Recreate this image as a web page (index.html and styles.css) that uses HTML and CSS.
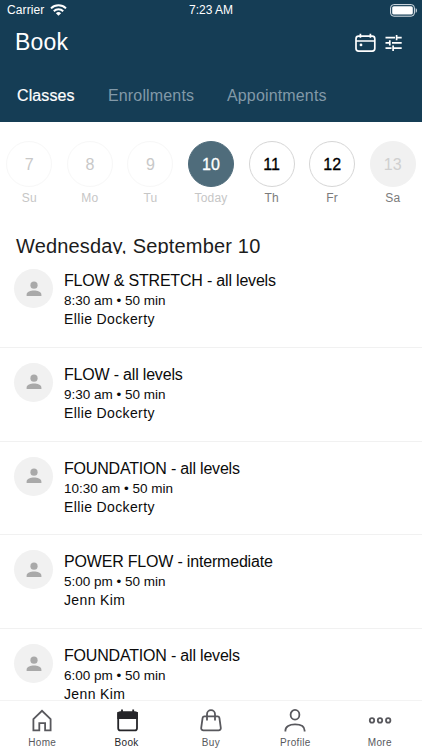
FILE: index.html
```
<!DOCTYPE html>
<html lang="en">
<head>
<meta charset="utf-8">
<title>Book</title>
<link rel="stylesheet" href="styles.css">
</head>
<body>
<svg width="0" height="0" class="defs">
  <symbol id="person" viewBox="0 0 16 16"><circle cx="8" cy="4.2" r="3.6"/><path d="M.6 14.9v-1.2c0-2.8 4.2-4.1 7.4-4.1s7.4 1.3 7.4 4.1v1.2z"/></symbol>
</svg>
<div class="app">
  <header class="header">
    <div class="status">
      <div class="carrier"><span>Carrier</span>
        <svg width="17" height="12" viewBox="0 0 17 12"><g fill="none" stroke="#fff" stroke-width="2"><path d="M1 4.4a10.8 10.8 0 0 1 15 0"/><path d="M3.8 7.2a6.8 6.8 0 0 1 9.4 0"/></g><path d="M5.9 9.2a3.8 3.8 0 0 1 5.2 0L8.5 11.8z" fill="#fff"/></svg>
      </div>
      <div class="clock">7:23 AM</div>
      <svg class="battery" width="28" height="13" viewBox="0 0 28 13"><rect x=".6" y=".6" width="23.8" height="11.6" rx="3.2" fill="none" stroke="#dce4ea" stroke-width="1"/><rect x="2.2" y="2.2" width="20.6" height="8.4" rx="1.6" fill="#fff"/><path d="M25.7 4.2c1.6.6 1.6 3.9 0 4.5z" fill="#dce4ea"/></svg>
    </div>
    <div class="titlebar">
      <h1>Book</h1>
      <div class="actions">
        <svg width="21" height="20" viewBox="0 0 21 20" fill="none" stroke="#fff" stroke-width="1.7"><rect x="1" y="3.2" width="18.8" height="15" rx="2.6"/><path d="M1 8h18.8M5.4.8v4M15.4.8v4"/><circle cx="6" cy="11.9" r="1.4" fill="#fff" stroke="none"/></svg>
        <svg width="18" height="18" viewBox="0 0 18 18" fill="none" stroke="#fff" stroke-width="1.7"><path d="M.5 3.6h9.5M11.6.9v5.4M11.6 3.6h5.1M.5 8.9h4.8M4.8 6.2v5.4M7 8.9h9.7M.5 14.2h6M8.1 11.5v5.4M8.1 14.2h8.6"/></svg>
      </div>
    </div>
    <nav class="tabs"><span class="on t1">Classes</span><span class="t2">Enrollments</span><span class="t3">Appointments</span></nav>
  </header>
  <section class="week">
    <div class="day past"><b>7</b><span>Su</span></div>
    <div class="day past"><b>8</b><span>Mo</span></div>
    <div class="day past"><b>9</b><span>Tu</span></div>
    <div class="day today"><b>10</b><span>Today</span></div>
    <div class="day"><b>11</b><span>Th</span></div>
    <div class="day"><b>12</b><span>Fr</span></div>
    <div class="day off"><b>13</b><span>Sa</span></div>
  </section>
  <h2>Wednesday, September 10</h2>
  <main class="list">
    <article class="row"><div class="avatar"><svg width="16" height="16"><use href="#person"/></svg></div><div><div class="name">FLOW &amp; STRETCH - all levels</div><div class="time">8:30 am • 50 min</div><div class="coach">Ellie Dockerty</div></div></article>
    <article class="row"><div class="avatar"><svg width="16" height="16"><use href="#person"/></svg></div><div><div class="name">FLOW - all levels</div><div class="time">9:30 am • 50 min</div><div class="coach">Ellie Dockerty</div></div></article>
    <article class="row"><div class="avatar"><svg width="16" height="16"><use href="#person"/></svg></div><div><div class="name">FOUNDATION - all levels</div><div class="time">10:30 am • 50 min</div><div class="coach">Ellie Dockerty</div></div></article>
    <article class="row"><div class="avatar"><svg width="16" height="16"><use href="#person"/></svg></div><div><div class="name">POWER FLOW - intermediate</div><div class="time">5:00 pm • 50 min</div><div class="coach">Jenn Kim</div></div></article>
    <article class="row"><div class="avatar"><svg width="16" height="16"><use href="#person"/></svg></div><div><div class="name">FOUNDATION - all levels</div><div class="time">6:00 pm • 50 min</div><div class="coach">Jenn Kim</div></div></article>
  </main>
  <footer class="bar">
    <div class="item"><svg width="24" height="24" viewBox="0 0 24 24"><path d="M3.4 10.2 12 1.8l8.6 8.4v11.2h-5.5v-7.2H9.3v7.2H3.4z"/></svg><span>Home</span></div>
    <div class="item on"><svg width="24" height="24" viewBox="0 0 24 24"><rect x="3.2" y="3.2" width="18.8" height="18.2" rx="2.2"/><path d="M7 .6v4M18.2 .6v4"/><path class="solid" d="M3.2 4h18.8v5H3.2z"/></svg><span>Book</span></div>
    <div class="item"><svg width="24" height="24" viewBox="0 0 24 24"><path d="M5.4 7.4h13.2q1.5 0 1.8 1.5l1.4 9.9a2.2 2.2 0 0 1-2.2 2.6H4.4a2.2 2.2 0 0 1-2.2-2.6l1.4-9.9q.3-1.5 1.8-1.5zM8 11.4V5.2a4 4 0 0 1 8 0v6.2"/></svg><span>Buy</span></div>
    <div class="item"><svg width="24" height="24" viewBox="0 0 24 24"><ellipse cx="12" cy="5.8" rx="4.4" ry="4.9"/><path d="M2.4 22.6v-1c0-4.2 4-6.2 9.6-6.2s9.6 2 9.6 6.2v1"/></svg><span>Profile</span></div>
    <div class="item"><svg width="24" height="24" viewBox="0 0 24 24"><circle cx="4" cy="11.4" r="2.2"/><circle cx="12" cy="11.4" r="2.2"/><circle cx="20.2" cy="11.4" r="2.2"/></svg><span>More</span></div>
  </footer>
</div>
</body>
</html>
```
FILE: styles.css
```
* { box-sizing: border-box; }
body { margin: 0; background: #fff; color: #0b0b0b; font-family: "Liberation Sans", Arial, sans-serif; }
svg { display: block; flex: none; }
.defs { position: absolute; }
.app { width: 422px; height: 750px; display: flex; flex-direction: column; overflow: hidden; }
.header { height: 122px; flex: none; background: #153d55; color: #fff; }
.status { height: 20px; display: grid; grid-template-columns: 1fr auto 1fr; align-items: center; padding: 0 4px 0 7px; font-size: 12px; }
.carrier { display: flex; align-items: center; gap: 6px; letter-spacing: .1px; }
.clock { margin-left: -3px; }
.battery { justify-self: end; }
.titlebar { height: 46px; display: flex; align-items: center; justify-content: space-between; padding: 0 19px 2px 15px; }
h1 { margin: 0; font-size: 23px; font-weight: 400; letter-spacing: .2px; line-height: 28px; }
.actions { display: flex; align-items: center; gap: 9px; padding-top: 1px; }
.tabs { display: flex; padding-top: 20px; font-size: 16px; line-height: 20px; color: #8299a8; }
.tabs span { white-space: nowrap; }
.tabs .on { color: #fff; -webkit-text-stroke: .2px; }
.t1 { width: 91px; margin-left: 17px; letter-spacing: .1px; }
.t2 { width: 119px; letter-spacing: .15px; }
.t3 { letter-spacing: .15px; }
.week { flex: none; height: 110px; padding: 19px 0 0; display: flex; width: 424px; margin-left: -1px; }
.day { width: 60.6px; display: flex; flex-direction: column; align-items: center; }
.day b { width: 46px; height: 46px; border: 1px solid #d6d6d6; border-radius: 50%; display: grid; place-items: center; padding-top: 2px; font-size: 16px; font-weight: 400; color: #000; -webkit-text-stroke: .3px; }
.day span { font-size: 12px; line-height: 16px; margin-top: 3px; color: #7b7b7b; letter-spacing: .2px; }
.day.past b { border-color: #f7f7f7; color: #c8c8c8; -webkit-text-stroke: 0; }
.past span, .today span { color: #c6c6c6; }
.today b { background: #4f6c7b; border-color: #4f6c7b; color: #fff; }
.off b { background: #f1f1f1; border-color: #f1f1f1; color: #cfcfcf; -webkit-text-stroke: 0; }
h2 { flex: none; margin: 0; height: 22px; overflow: hidden; padding-left: 16px; font-size: 20px; line-height: 28px; font-weight: 400; color: #1c1c1c; white-space: nowrap; letter-spacing: .17px; }
.list { flex: 1; min-height: 0; overflow: hidden; }
.row { height: 93.75px; display: flex; gap: 11px; padding: 15px 0 0 14px; border-bottom: 1px solid #f1f1f1; }
.avatar { width: 39px; height: 39px; border-radius: 50%; background: #f1f1f1; fill: #a9a9a9; display: grid; place-items: center; }
.name { font-size: 16px; line-height: 22px; margin-top: 1px; letter-spacing: -.19px; }
.time { font-size: 13.5px; line-height: 17px; }
.coach { font-size: 14px; line-height: 20px; letter-spacing: .37px; }
.bar { flex: none; height: 50.5px; display: grid; grid-template-columns: repeat(5, 1fr); border-top: 1px solid #f3f3f3; }
.item { display: flex; flex-direction: column; align-items: center; padding-top: 8px; color: #58585d; }
.item svg { fill: none; stroke: currentColor; stroke-width: 1.8; }
.item .solid { fill: currentColor; }
.item span { font-size: 10px; line-height: 12px; margin-top: 4px; letter-spacing: .35px; }
.item.on { color: #252529; }
```
